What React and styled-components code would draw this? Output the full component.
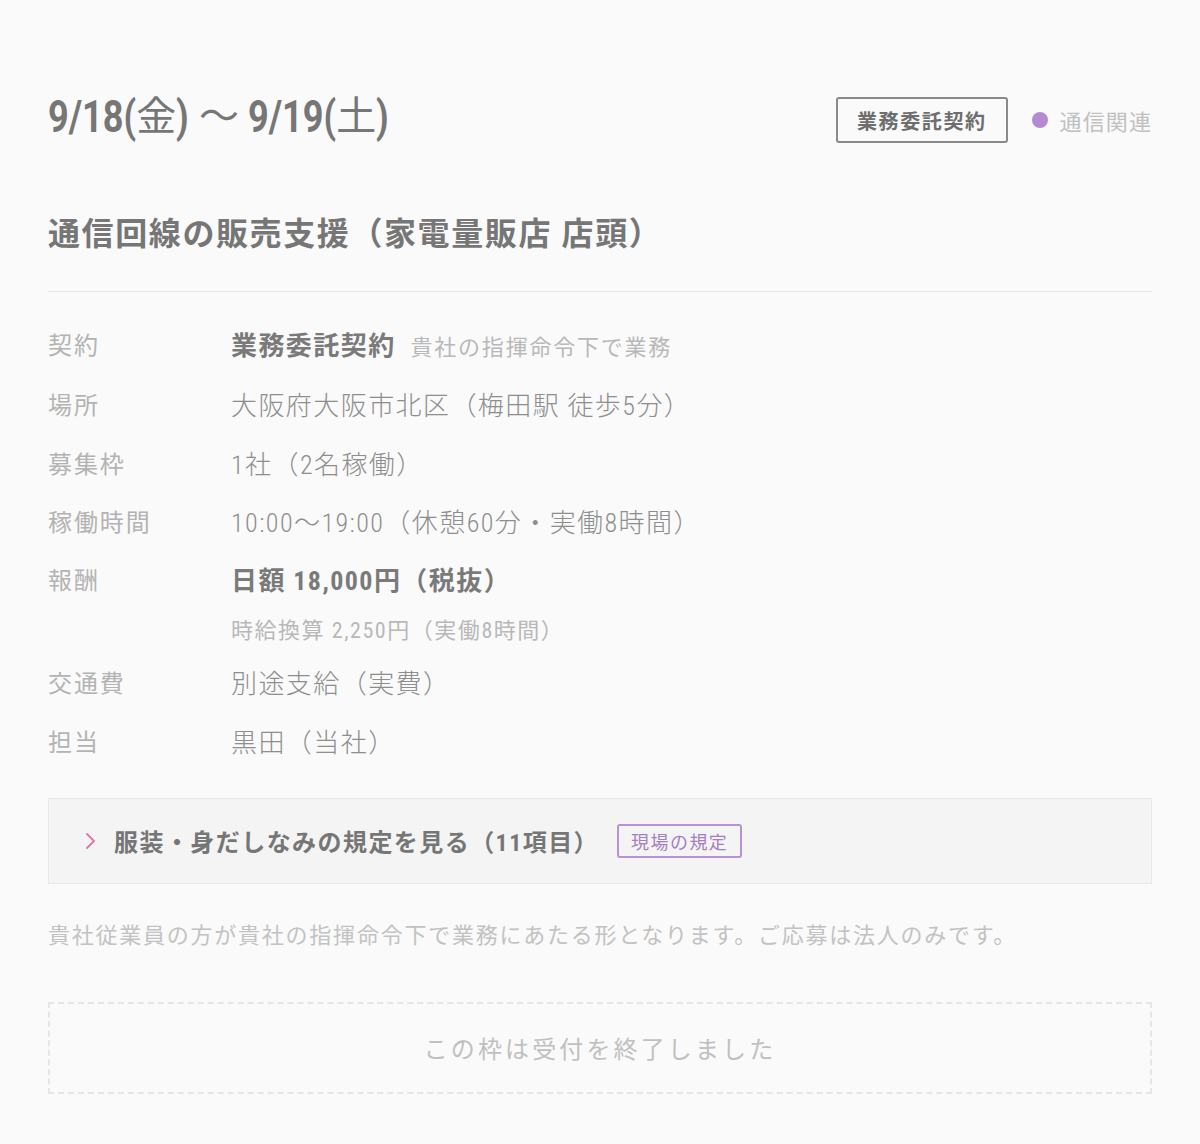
import React, { useLayoutEffect, useRef, useState } from "react";
import styled, { createGlobalStyle } from "styled-components";

const GlobalStyle = createGlobalStyle`
  html, body {
    margin: 0;
    padding: 0;
    background: #fafafa;
  }
  body {
    font-family: "Roboto Condensed", Roboto, "Noto Sans CJK JP", sans-serif;
    -webkit-font-smoothing: antialiased;
  }
  * { box-sizing: border-box; }
`;

const Page = styled.main`
  min-height: 1144px;
  padding: 92px 48px 49px;
  background: #fafafa;
`;

const Header = styled.header`
  display: flex;
  align-items: center;
  justify-content: space-between;
  height: 56px;
`;

const DateHeading = styled.h1`
  margin: -6px 0 0;
  font-family: Roboto, "Noto Sans CJK JP", sans-serif;
  font-size: 40px;
  font-weight: 400;
  line-height: 56px;
  color: #767676;
  white-space: nowrap;
  display: flex;
  align-items: center;
`;

const NarrowBox = styled.span`
  display: inline-block;
  font-family: Roboto, sans-serif;
  font-size: 44px;
  font-weight: 700;
  transform: scaleX(${(p) => p.$scale});
  transform-origin: left center;
  white-space: pre;
`;

const Wave = styled.span`
  margin: 0 9px 0 10px;
`;

// Condensed latin run: scaled horizontally, with its layout width trimmed to match
function Narrow({ children, scale = 0.82 }) {
  const ref = useRef(null);
  const [width, setWidth] = useState(null);
  useLayoutEffect(() => {
    if (ref.current) setWidth(ref.current.offsetWidth);
  }, []);
  return (
    <NarrowBox
      ref={ref}
      $scale={scale}
      style={width ? { marginRight: -width * (1 - scale) } : undefined}
    >
      {children}
    </NarrowBox>
  );
}

const Tags = styled.div`
  display: flex;
  align-items: center;
  gap: 24px;
`;

const ContractBadge = styled.span`
  display: inline-flex;
  align-items: center;
  height: 46px;
  padding: 0 19px;
  border: 2px solid #8a8a8a;
  border-radius: 3px;
  font-family: Roboto, "Noto Sans CJK JP", sans-serif;
  font-size: 20px;
  font-weight: 700;
  letter-spacing: 0.08em;
  color: #6e6e6e;
`;

const Category = styled.span`
  display: inline-flex;
  align-items: center;
  gap: 12px;
  font-size: 22px;
  letter-spacing: 0.05em;
  color: #c0c0c0;
  &::before {
    content: "";
    width: 16px;
    height: 16px;
    border-radius: 50%;
    background: #b48bcf;
  }
`;

const Title = styled.h2`
  margin: 64px 0 0;
  padding-bottom: 35px;
  border-bottom: 1px solid #e6e6e6;
  font-family: Roboto, "Noto Sans CJK JP", sans-serif;
  font-size: 32px;
  font-weight: 700;
  line-height: 44px;
  letter-spacing: 0.05em;
  color: #767676;
`;

const Details = styled.dl`
  display: grid;
  grid-template-columns: 183px 1fr;
  row-gap: 22.3px;
  margin: 36px 0 0;
  font-size: 24px;
  line-height: 36px;
`;

const Label = styled.dt`
  color: #b3b3b3;
  font-weight: 400;
  letter-spacing: 0.08em;
`;

const Value = styled.dd`
  margin: 0;
  font-size: 26px;
  font-weight: 300;
  letter-spacing: 0.055em;
  color: #8e8e8e;
`;

const Strong = styled.span`
  font-weight: 700;
  color: #7a7a7a;
`;

const Aside = styled.span`
  margin-left: 15px;
  font-size: 22px;
  font-weight: 400;
  letter-spacing: 0.08em;
  color: #b8b8b8;
`;

const SubLine = styled.div`
  margin-top: 19px;
  font-size: 22px;
  line-height: 26px;
  font-weight: 400;
  letter-spacing: 0.07em;
  color: #b8b8b8;
`;

const Rules = styled.button`
  display: flex;
  align-items: center;
  width: 100%;
  height: 86px;
  margin-top: 37px;
  padding: 0 0 0 36px;
  border: 1px solid #e8e8e8;
  background: #f4f4f4;
  font-family: inherit;
  text-align: left;
  cursor: pointer;
`;

const Chevron = styled.svg`
  flex: none;
  width: 12px;
  height: 20px;
`;

const RulesText = styled.span`
  margin-left: 17px;
  font-size: 24px;
  font-weight: 700;
  letter-spacing: 0.06em;
  color: #767676;
`;

const SiteTag = styled.span`
  display: inline-flex;
  align-items: center;
  height: 34px;
  margin-left: 18px;
  padding: 0 12px;
  border: 2px solid #b892d2;
  border-radius: 3px;
  font-size: 18px;
  letter-spacing: 0.08em;
  color: #a47fc0;
`;

const Note = styled.p`
  margin: 36px 0 0;
  font-size: 22px;
  line-height: 32px;
  letter-spacing: 0.08em;
  color: #c2c2c2;
`;

const ClosedBox = styled.div`
  display: flex;
  align-items: center;
  justify-content: center;
  height: 92px;
  margin-top: 50px;
  border: 2px dashed #e6e6e6;
  font-size: 24px;
  letter-spacing: 0.13em;
  color: #c0c0c0;
`;

const rows = [
  {
    label: "契約",
    value: (
      <>
        <Strong>業務委託契約</Strong>
        <Aside>貴社の指揮命令下で業務</Aside>
      </>
    ),
  },
  { label: "場所", value: "大阪府大阪市北区（梅田駅 徒歩5分）" },
  { label: "募集枠", value: "1社（2名稼働）" },
  { label: "稼働時間", value: "10:00～19:00（休憩60分・実働8時間）" },
  {
    label: "報酬",
    value: (
      <>
        <Strong>日額 18,000円（税抜）</Strong>
        <SubLine>時給換算 2,250円（実働8時間）</SubLine>
      </>
    ),
  },
  { label: "交通費", value: "別途支給（実費）" },
  { label: "担当", value: "黒田（当社）" },
];

export default function App() {
  return (
    <>
      <GlobalStyle />
      <Page>
        <Header>
          <DateHeading>
            <Narrow>9/18(</Narrow>
            <span>金</span>
            <Narrow>)</Narrow>
            <Wave>～</Wave>
            <Narrow>9/19(</Narrow>
            <span>土</span>
            <Narrow>)</Narrow>
          </DateHeading>
          <Tags>
            <ContractBadge>業務委託契約</ContractBadge>
            <Category>通信関連</Category>
          </Tags>
        </Header>

        <Title>通信回線の販売支援（家電量販店 店頭）</Title>

        <Details>
          {rows.map((row) => (
            <React.Fragment key={row.label}>
              <Label>{row.label}</Label>
              <Value>{row.value}</Value>
            </React.Fragment>
          ))}
        </Details>

        <Rules type="button">
          <Chevron viewBox="0 0 12 20" aria-hidden="true">
            <polyline
              points="2,3 9,10 2,17"
              fill="none"
              stroke="#e27aa8"
              strokeWidth="2"
              strokeLinecap="round"
              strokeLinejoin="round"
            />
          </Chevron>
          <RulesText>服装・身だしなみの規定を見る（11項目）</RulesText>
          <SiteTag>現場の規定</SiteTag>
        </Rules>

        <Note>
          貴社従業員の方が貴社の指揮命令下で業務にあたる形となります。ご応募は法人のみです。
        </Note>

        <ClosedBox>この枠は受付を終了しました</ClosedBox>
      </Page>
    </>
  );
}
